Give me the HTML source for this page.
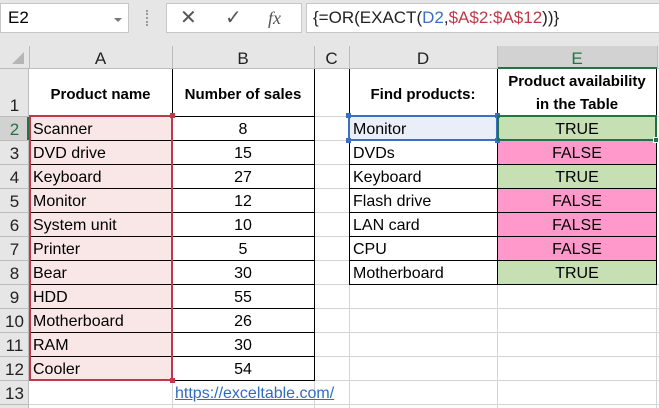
<!DOCTYPE html>
<html><head><style>
*{margin:0;padding:0;box-sizing:border-box}
body{width:659px;height:408px;overflow:hidden;background:#fff;font-family:"Liberation Sans",Arial,sans-serif;position:relative}
.a{position:absolute}
.t{position:absolute;font-size:16px;color:#000;white-space:nowrap;line-height:24px;margin-top:2px}
.c{text-align:center}
.b{font-weight:bold;font-size:15px}
.h{position:absolute;height:1px}
.v{position:absolute;width:1px}
.rh{position:absolute;left:0;width:29px;text-align:center;font-size:17px;color:#222;line-height:24px;margin-top:2px}
</style></head><body>
<div class="a" style="left:0;top:0;width:659px;height:46px;background:#e6e6e6"></div>
<div class="a" style="left:0;top:3px;width:129px;height:30px;background:#fff;border:1px solid #c6c6c6"></div>
<div class="t" style="left:8px;top:4px;font-size:17px">E2</div>
<div class="a" style="left:114px;top:18px;border-left:4px solid transparent;border-right:4px solid transparent;border-top:4px solid #777"></div>
<div class="a" style="left:146px;top:10px;width:2px;height:16px;border-left:2px dotted #999"></div>
<div class="a" style="left:166px;top:3px;width:136px;height:30px;background:#fff;border:1px solid #c6c6c6"></div>
<div class="t" style="left:180px;top:4px;font-size:20px;color:#555">✕</div>
<div class="t" style="left:225px;top:4px;font-size:20px;color:#555">✓</div>
<div class="t" style="left:268px;top:4px;font-size:18px;color:#555;font-family:'Liberation Serif',serif;font-style:italic">fx</div>
<div class="a" style="left:306px;top:3px;width:360px;height:30px;background:#fff;border:1px solid #c6c6c6"></div>
<div class="t" style="left:313px;top:4px;font-size:17px;color:#222">{=OR(EXACT(<span style="color:#3a6fc4">D2</span>,<span style="color:#c0394a">$A$2:$A$12</span>))}</div>
<div class="a" style="left:0;top:46px;width:659px;height:23px;background:#e6e6e6;border-bottom:1px solid #bcbcbc"></div>
<div class="a" style="left:497px;top:46px;width:160px;height:23px;background:#d2d2d2;border-bottom:2px solid #217346"></div>
<div class="a" style="left:0;top:69px;width:29px;height:339px;background:#e6e6e6;border-right:1px solid #bcbcbc"></div>
<div class="a" style="left:0;top:116px;width:29px;height:24px;background:#d2d2d2;border-right:2px solid #217346"></div>
<div class="a" style="left:12px;top:52px;width:0;height:0;border-left:12px solid transparent;border-bottom:12px solid #b5b5b5"></div>
<div class="v" style="left:29px;top:46px;height:23px;background:#bcbcbc"></div>
<div class="v" style="left:172px;top:46px;height:23px;background:#bcbcbc"></div>
<div class="v" style="left:314px;top:46px;height:23px;background:#bcbcbc"></div>
<div class="v" style="left:349px;top:46px;height:23px;background:#bcbcbc"></div>
<div class="v" style="left:497px;top:46px;height:23px;background:#bcbcbc"></div>
<div class="v" style="left:657px;top:46px;height:23px;background:#bcbcbc"></div>
<div class="t c" style="left:29px;width:143px;top:45px;line-height:23px;font-size:17px;color:#222">A</div>
<div class="t c" style="left:172px;width:142px;top:45px;line-height:23px;font-size:17px;color:#222">B</div>
<div class="t c" style="left:314px;width:35px;top:45px;line-height:23px;font-size:17px;color:#222">C</div>
<div class="t c" style="left:349px;width:148px;top:45px;line-height:23px;font-size:17px;color:#222">D</div>
<div class="t c" style="left:497px;width:160px;top:45px;line-height:23px;font-size:17px;color:#217346">E</div>
<div class="rh" style="top:92px">1</div>
<div class="rh" style="top:116px;color:#217346">2</div>
<div class="rh" style="top:140px">3</div><div class="rh" style="top:164px">4</div>
<div class="rh" style="top:188px">5</div><div class="rh" style="top:212px">6</div>
<div class="rh" style="top:236px">7</div><div class="rh" style="top:260px">8</div>
<div class="rh" style="top:284px">9</div><div class="rh" style="top:308px">10</div>
<div class="rh" style="top:332px">11</div><div class="rh" style="top:356px">12</div>
<div class="rh" style="top:380px">13</div>
<div class="h" style="left:0;width:29px;top:116px;background:#bcbcbc"></div>
<div class="h" style="left:0;width:29px;top:140px;background:#bcbcbc"></div>
<div class="h" style="left:0;width:29px;top:164px;background:#bcbcbc"></div>
<div class="h" style="left:0;width:29px;top:188px;background:#bcbcbc"></div>
<div class="h" style="left:0;width:29px;top:212px;background:#bcbcbc"></div>
<div class="h" style="left:0;width:29px;top:236px;background:#bcbcbc"></div>
<div class="h" style="left:0;width:29px;top:260px;background:#bcbcbc"></div>
<div class="h" style="left:0;width:29px;top:284px;background:#bcbcbc"></div>
<div class="h" style="left:0;width:29px;top:308px;background:#bcbcbc"></div>
<div class="h" style="left:0;width:29px;top:332px;background:#bcbcbc"></div>
<div class="h" style="left:0;width:29px;top:356px;background:#bcbcbc"></div>
<div class="h" style="left:0;width:29px;top:380px;background:#bcbcbc"></div>
<div class="h" style="left:0;width:29px;top:404px;background:#bcbcbc"></div>
<div class="h" style="left:29px;width:630px;top:116px;background:#d4d4d4"></div>
<div class="h" style="left:314px;width:345px;top:284px;background:#d4d4d4"></div>
<div class="h" style="left:314px;width:345px;top:308px;background:#d4d4d4"></div>
<div class="h" style="left:314px;width:345px;top:332px;background:#d4d4d4"></div>
<div class="h" style="left:314px;width:345px;top:356px;background:#d4d4d4"></div>
<div class="h" style="left:314px;width:345px;top:380px;background:#d4d4d4"></div>
<div class="h" style="left:29px;width:630px;top:404px;background:#d4d4d4"></div>
<div class="h" style="left:314px;width:35px;top:140px;background:#d4d4d4"></div>
<div class="h" style="left:314px;width:35px;top:164px;background:#d4d4d4"></div>
<div class="h" style="left:314px;width:35px;top:188px;background:#d4d4d4"></div>
<div class="h" style="left:314px;width:35px;top:212px;background:#d4d4d4"></div>
<div class="h" style="left:314px;width:35px;top:236px;background:#d4d4d4"></div>
<div class="h" style="left:314px;width:35px;top:260px;background:#d4d4d4"></div>
<div class="v" style="left:172px;top:380px;height:28px;background:#d4d4d4"></div>
<div class="v" style="left:314px;top:380px;height:28px;background:#d4d4d4"></div>
<div class="v" style="left:349px;top:284px;height:124px;background:#d4d4d4"></div>
<div class="v" style="left:497px;top:284px;height:124px;background:#d4d4d4"></div>
<div class="v" style="left:656px;top:69px;height:339px;background:#d4d4d4"></div>
<div class="a" style="left:30px;top:117px;width:142px;height:263px;background:#f9e6e6"></div>
<div class="a" style="left:350px;top:117px;width:147px;height:23px;background:#e9eef8"></div>
<div class="a" style="left:498px;top:117px;width:158px;height:23px;background:#c6e0b4"></div>
<div class="a" style="left:498px;top:141px;width:158px;height:23px;background:#ff99cc"></div>
<div class="a" style="left:498px;top:165px;width:158px;height:23px;background:#c6e0b4"></div>
<div class="a" style="left:498px;top:189px;width:158px;height:71px;background:#ff99cc"></div>
<div class="a" style="left:498px;top:261px;width:158px;height:23px;background:#c6e0b4"></div>
<div class="v" style="left:172px;top:69px;height:312px;background:#000"></div>
<div class="v" style="left:314px;top:69px;height:312px;background:#000"></div>
<div class="h" style="left:172px;width:143px;top:116px;background:#000"></div>
<div class="h" style="left:29px;width:286px;top:140px;background:#000"></div>
<div class="h" style="left:29px;width:286px;top:164px;background:#000"></div>
<div class="h" style="left:29px;width:286px;top:188px;background:#000"></div>
<div class="h" style="left:29px;width:286px;top:212px;background:#000"></div>
<div class="h" style="left:29px;width:286px;top:236px;background:#000"></div>
<div class="h" style="left:29px;width:286px;top:260px;background:#000"></div>
<div class="h" style="left:29px;width:286px;top:284px;background:#000"></div>
<div class="h" style="left:29px;width:286px;top:308px;background:#000"></div>
<div class="h" style="left:29px;width:286px;top:332px;background:#000"></div>
<div class="h" style="left:29px;width:286px;top:356px;background:#000"></div>
<div class="h" style="left:172px;width:143px;top:380px;background:#000"></div>
<div class="v" style="left:349px;top:69px;height:216px;background:#000"></div>
<div class="v" style="left:497px;top:69px;height:216px;background:#000"></div>
<div class="v" style="left:656px;top:69px;height:216px;background:#000"></div>
<div class="h" style="left:349px;width:308px;top:140px;background:#000"></div>
<div class="h" style="left:349px;width:308px;top:164px;background:#000"></div>
<div class="h" style="left:349px;width:308px;top:188px;background:#000"></div>
<div class="h" style="left:349px;width:308px;top:212px;background:#000"></div>
<div class="h" style="left:349px;width:308px;top:236px;background:#000"></div>
<div class="h" style="left:349px;width:308px;top:260px;background:#000"></div>
<div class="h" style="left:349px;width:308px;top:284px;background:#000"></div>
<div class="a" style="left:29px;top:115px;width:144px;height:266px;border:2px solid #c0394a"></div>
<div class="a" style="left:170px;top:113px;width:5px;height:5px;background:#c0394a"></div>
<div class="a" style="left:170px;top:378px;width:5px;height:5px;background:#c0394a"></div>
<div class="a" style="left:348px;top:115px;width:150px;height:26px;border:2px solid #3a6fc4"></div>
<div class="a" style="left:346px;top:113px;width:5px;height:5px;background:#3a6fc4"></div>
<div class="a" style="left:495px;top:113px;width:5px;height:5px;background:#3a6fc4"></div>
<div class="a" style="left:346px;top:138px;width:5px;height:5px;background:#3a6fc4"></div>
<div class="a" style="left:495px;top:138px;width:5px;height:5px;background:#3a6fc4"></div>
<div class="a" style="left:497px;top:115px;width:160px;height:26px;border:2px solid #217346"></div>
<div class="a" style="left:653px;top:137px;width:6px;height:6px;background:#217346;border:1px solid #fff"></div>
<div class="t c b" style="left:29px;width:143px;top:81px">Product name</div>
<div class="t c b" style="left:172px;width:142px;top:81px">Number of sales</div>
<div class="t c b" style="left:349px;width:148px;top:81px">Find products:</div>
<div class="t c b" style="left:497px;width:160px;top:68px">Product availability</div>
<div class="t c b" style="left:497px;width:160px;top:91px">in the Table</div>
<div class="t" style="left:33px;top:116px">Scanner</div><div class="t c" style="left:172px;width:142px;top:116px">8</div>
<div class="t" style="left:33px;top:140px">DVD drive</div><div class="t c" style="left:172px;width:142px;top:140px">15</div>
<div class="t" style="left:33px;top:164px">Keyboard</div><div class="t c" style="left:172px;width:142px;top:164px">27</div>
<div class="t" style="left:33px;top:188px">Monitor</div><div class="t c" style="left:172px;width:142px;top:188px">12</div>
<div class="t" style="left:33px;top:212px">System unit</div><div class="t c" style="left:172px;width:142px;top:212px">10</div>
<div class="t" style="left:33px;top:236px">Printer</div><div class="t c" style="left:172px;width:142px;top:236px">5</div>
<div class="t" style="left:33px;top:260px">Bear</div><div class="t c" style="left:172px;width:142px;top:260px">30</div>
<div class="t" style="left:33px;top:284px">HDD</div><div class="t c" style="left:172px;width:142px;top:284px">55</div>
<div class="t" style="left:33px;top:308px">Motherboard</div><div class="t c" style="left:172px;width:142px;top:308px">26</div>
<div class="t" style="left:33px;top:332px">RAM</div><div class="t c" style="left:172px;width:142px;top:332px">30</div>
<div class="t" style="left:33px;top:356px">Cooler</div><div class="t c" style="left:172px;width:142px;top:356px">54</div>
<div class="t" style="left:175px;top:380px;color:#2e6cc2;text-decoration:underline">https://exceltable.com/</div>
<div class="t" style="left:353px;top:116px">Monitor</div><div class="t c" style="left:497px;width:160px;top:116px">TRUE</div>
<div class="t" style="left:353px;top:140px">DVDs</div><div class="t c" style="left:497px;width:160px;top:140px">FALSE</div>
<div class="t" style="left:353px;top:164px">Keyboard</div><div class="t c" style="left:497px;width:160px;top:164px">TRUE</div>
<div class="t" style="left:353px;top:188px">Flash drive</div><div class="t c" style="left:497px;width:160px;top:188px">FALSE</div>
<div class="t" style="left:353px;top:212px">LAN card</div><div class="t c" style="left:497px;width:160px;top:212px">FALSE</div>
<div class="t" style="left:353px;top:236px">CPU</div><div class="t c" style="left:497px;width:160px;top:236px">FALSE</div>
<div class="t" style="left:353px;top:260px">Motherboard</div><div class="t c" style="left:497px;width:160px;top:260px">TRUE</div>
</body></html>
